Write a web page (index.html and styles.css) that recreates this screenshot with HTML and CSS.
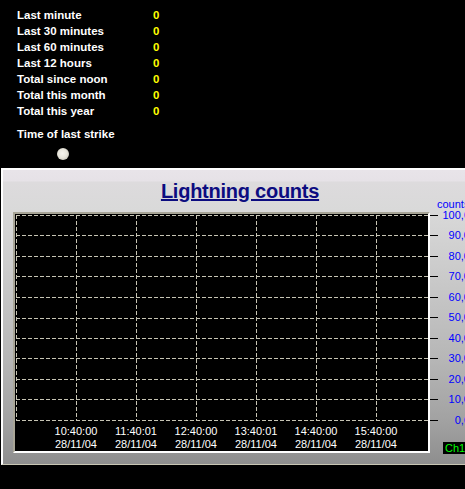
FILE: index.html
```html
<!DOCTYPE html>
<html>
<head>
<meta charset="utf-8">
<title>Lightning counts</title>
<link rel="stylesheet" href="styles.css">
</head>
<body>
<div class="stats">
  <span class="label">Last minute</span><span class="val">0</span>
  <span class="label">Last 30 minutes</span><span class="val">0</span>
  <span class="label">Last 60 minutes</span><span class="val">0</span>
  <span class="label">Last 12 hours</span><span class="val">0</span>
  <span class="label">Total since noon</span><span class="val">0</span>
  <span class="label">Total this month</span><span class="val">0</span>
  <span class="label">Total this year</span><span class="val">0</span>
</div>
<div class="strike">
  <div class="strike-label">Time of last strike</div>
  <div class="dot"></div>
</div>
<div class="panel">
  <div class="title"><span>Lightning counts</span></div>
  <div class="plot-row">
    <div class="frame">
      <svg class="grid" width="413" height="207" viewBox="0 0 413 207">
        <g class="hl">
          <line x1="1" y1="1.5" x2="413" y2="1.5"/>
          <line x1="1" y1="21.5" x2="413" y2="21.5"/>
          <line x1="1" y1="42.5" x2="413" y2="42.5"/>
          <line x1="1" y1="62.5" x2="413" y2="62.5"/>
          <line x1="1" y1="83.5" x2="413" y2="83.5"/>
          <line x1="1" y1="104.5" x2="413" y2="104.5"/>
          <line x1="1" y1="124.5" x2="413" y2="124.5"/>
          <line x1="1" y1="144.5" x2="413" y2="144.5"/>
          <line x1="1" y1="165.5" x2="413" y2="165.5"/>
          <line x1="1" y1="185.5" x2="413" y2="185.5"/>
          <line x1="1" y1="206.5" x2="413" y2="206.5"/>
        </g>
        <g class="vl">
          <line x1="1.5" y1="1" x2="1.5" y2="207"/>
          <line x1="61.5" y1="1" x2="61.5" y2="207"/>
          <line x1="121.5" y1="1" x2="121.5" y2="207"/>
          <line x1="181.5" y1="1" x2="181.5" y2="207"/>
          <line x1="241.5" y1="1" x2="241.5" y2="207"/>
          <line x1="301.5" y1="1" x2="301.5" y2="207"/>
          <line x1="361.5" y1="1" x2="361.5" y2="207"/>
        </g>
      </svg>
      <div class="xlabels">
        <div class="xl">10:40:00<br>28/11/04</div>
        <div class="xl">11:40:01<br>28/11/04</div>
        <div class="xl">12:40:00<br>28/11/04</div>
        <div class="xl">13:40:01<br>28/11/04</div>
        <div class="xl">14:40:00<br>28/11/04</div>
        <div class="xl">15:40:00<br>28/11/04</div>
      </div>
    </div>
    <div class="yaxis">
      <div class="yunit">counts</div>
      <div class="trow"><span class="tick"></span><span class="yl">100,0</span></div>
      <div class="trow"><span class="tick"></span><span class="yl">90,0</span></div>
      <div class="trow"><span class="tick"></span><span class="yl">80,0</span></div>
      <div class="trow"><span class="tick"></span><span class="yl">70,0</span></div>
      <div class="trow"><span class="tick"></span><span class="yl">60,0</span></div>
      <div class="trow"><span class="tick"></span><span class="yl">50,0</span></div>
      <div class="trow"><span class="tick"></span><span class="yl">40,0</span></div>
      <div class="trow"><span class="tick"></span><span class="yl">30,0</span></div>
      <div class="trow"><span class="tick"></span><span class="yl">20,0</span></div>
      <div class="trow"><span class="tick"></span><span class="yl">10,0</span></div>
      <div class="trow"><span class="tick"></span><span class="yl">0,0</span></div>
      <div class="ch">Ch1</div>
    </div>
  </div>
</div>
</body>
</html>
```
FILE: styles.css
```css
html, body {
  margin: 0;
  padding: 0;
  background: #000;
  overflow: hidden;
}
body {
  width: 465px;
  height: 489px;
  font-family: "Liberation Sans", Arial, sans-serif;
}
.stats {
  display: grid;
  grid-template-columns: 136px 20px;
  grid-auto-rows: 15.9px;
  padding: 8.2px 0 0 17px;
  font-size: 11.5px;
  font-weight: bold;
  line-height: 15.9px;
  white-space: nowrap;
}
.label { color: #fff; }
.val { color: #ffff00; }
.strike {
  padding-left: 17px;
}
.strike-label {
  margin-top: 7.7px;
  color: #fff;
  font-size: 11.5px;
  font-weight: bold;
  line-height: 15.8px;
}
.dot {
  width: 12px;
  height: 12px;
  margin: 5.5px 0 0 40px;
  border-radius: 50%;
  background: radial-gradient(circle at 45% 45%, #f6f4ee 0, #e8e6dc 45%, #c4c0b4 85%, #9c988c 100%);
}
.panel {
  margin: 8px 0 0 1px;
  width: 474px;
  height: 294px;
  border-top: 2px solid #fff;
  border-left: 2px solid #fff;
  border-bottom: 1px solid #c8c6b4;
  background: linear-gradient(to bottom, #e8e4e9 0, #e6e2e7 11px, #dddbdd 12px, #d9d9d9 40px, #c9c9c9 110px, #b6b6b6 190px, #a2a2a2 250px, #8e8e8e 294px);
}
.title {
  padding-top: 10px;
  height: 22px;
  text-align: center;
  font-size: 20px;
  font-weight: bold;
  line-height: 22px;
  letter-spacing: -0.25px;
  color: #0c0c80;
}
.title span {
  text-decoration: underline;
  text-decoration-thickness: 2px;
}
.plot-row {
  display: flex;
  align-items: flex-start;
  margin-top: 10px;
  margin-left: 10px;
}
.frame {
  width: 413px;
  height: 237px;
  background: #000;
  border-top: 2px solid #a8a597;
  border-left: 2px solid #a8a597;
  border-right: 2px solid #fff;
  border-bottom: 2px solid #fff;
}
.grid {
  display: block;
  shape-rendering: crispEdges;
}
.grid line {
  stroke: #c6c4b4;
  stroke-width: 1;
  stroke-dasharray: 4 2;
}
.xlabels {
  display: flex;
  padding: 4px 0 0 31px;
}
.xl {
  width: 60px;
  text-align: center;
  color: #fff;
  font-size: 11px;
  line-height: 13px;
}
.yaxis {
  position: relative;
  margin-top: -7.25px;
  width: 44px;
}
.yunit {
  position: absolute;
  left: 7px;
  top: -7px;
  color: #0000ff;
  font-size: 11px;
  line-height: 13px;
}
.trow {
  display: flex;
  align-items: center;
  height: 20.5px;
}
.tick {
  width: 8px;
  height: 1px;
  background: #000;
}
.yl {
  margin-left: 4px;
  width: 28px;
  text-align: right;
  color: #0000ff;
  font-size: 11px;
  line-height: 13px;
  white-space: nowrap;
}
.ch {
  margin: 11.75px 0 0 13px;
  width: 31px;
  height: 12px;
  padding-left: 2px;
  background: #000;
  color: #00ff00;
  font-size: 11px;
  line-height: 12px;
}
```
